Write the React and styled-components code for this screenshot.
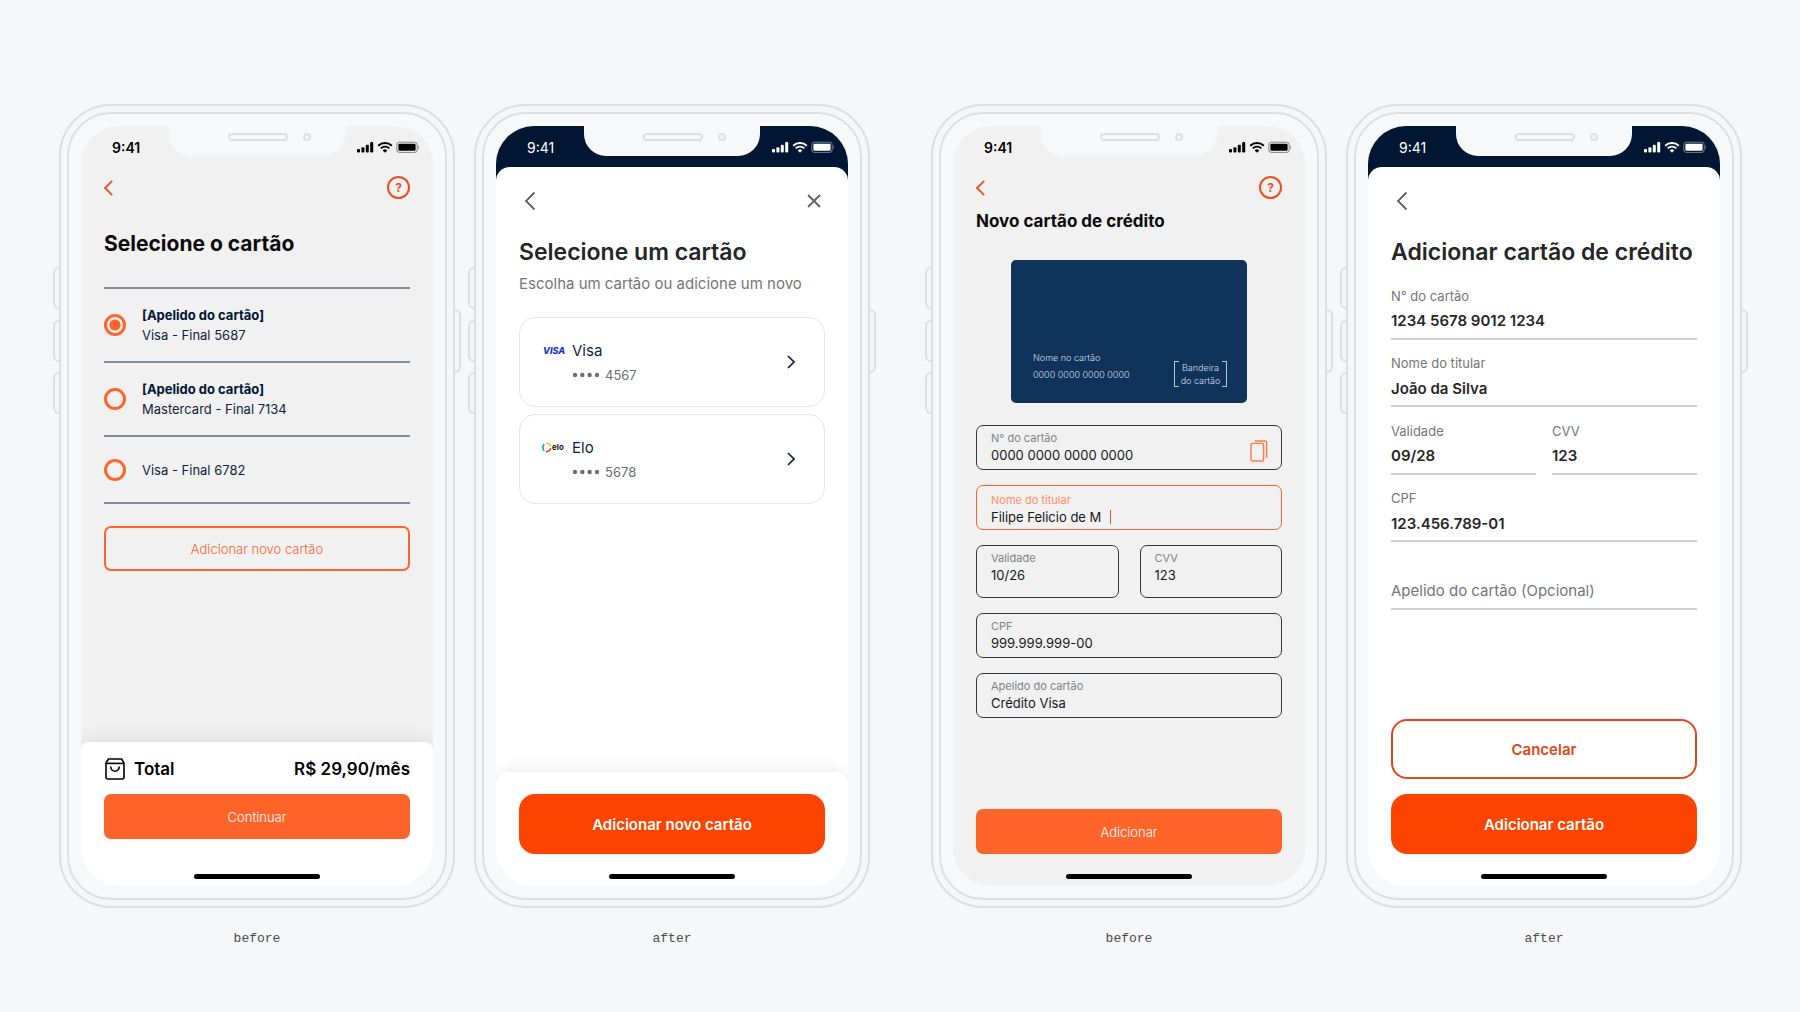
import React, { useState } from "react";
import styled, { createGlobalStyle, css } from "styled-components";

const GlobalStyle = createGlobalStyle`
  * {
    box-sizing: border-box;
  }

  body {
    margin: 0;
    background: #f6f7f9;
    font-family: Inter, "Liberation Sans", sans-serif;
    -webkit-font-smoothing: antialiased;
  }

  button,
  input {
    font-family: inherit;
    margin: 0;
  }

  button {
    cursor: pointer;
  }
`;

/* ---------- page ---------- */

const Page = styled.main`
  min-height: 100vh;
  display: flex;
  flex-wrap: wrap;
  justify-content: center;
  align-items: flex-start;
  gap: 61px;
  padding: 104px 0 48px 1px;
`;

const Comparison = styled.section`
  display: flex;
  gap: 19px;
`;

const Device = styled.figure`
  width: 396px;
  margin: 0;
`;

const Caption = styled.figcaption`
  margin-top: 21px;
  text-align: center;
  font-family: "Liberation Mono", monospace;
  font-size: 13px;
  line-height: 20px;
  color: #4d4d4d;
`;

/* ---------- phone ---------- */

const Shell = styled.div`
  position: relative;
  border: 2px solid #dedfe1;
  border-radius: 52px;
  padding: 6px;
`;

const Bezel = styled.div`
  border: 2px solid #dedfe1;
  border-radius: 44px;
  padding: 12px;
  background: #f7f8fa;
`;

const SideKey = styled.span`
  position: absolute;
  top: ${(props) => props.$top}px;
  width: 8px;
  height: ${(props) => props.$height}px;
  border: 2px solid #dedfe1;
  ${(props) =>
    props.$right
      ? css`
          right: -8px;
          border-left: none;
          border-radius: 0 6px 6px 0;
        `
      : css`
          left: -8px;
          border-right: none;
          border-radius: 6px 0 0 6px;
        `}
`;

const Screen = styled.div`
  position: relative;
  display: flex;
  flex-direction: column;
  min-height: 760px;
  border-radius: 38px;
  overflow: hidden;
  background: ${(props) =>
    props.$dark ? "linear-gradient(#001633 80px, #fff 80px)" : "#f1f1f1"};
`;

const Notch = styled.div`
  position: absolute;
  top: 0;
  left: 50%;
  width: 176px;
  height: 30px;
  margin-left: -88px;
  padding: 7px 0 0 59px;
  display: flex;
  align-items: flex-start;
  gap: 15px;
  border-radius: 0 0 22px 22px;
  background: #f7f8fa;
`;

const Speaker = styled.span`
  width: 60px;
  height: 8px;
  border: 2px solid #dedfe1;
  border-radius: 4px;
`;

const Camera = styled.span`
  width: 8px;
  height: 8px;
  border: 2px solid #dedfe1;
  border-radius: 50%;
`;

const StatusBar = styled.div`
  display: flex;
  justify-content: space-between;
  align-items: center;
  height: 41px;
  padding: 1px 13px 0 31px;
  font-size: 14px;
  font-weight: ${(props) => (props.$dark ? 400 : 600)};
  color: ${(props) => (props.$dark ? "#fff" : "#000")};
`;

const HomeIndicator = styled.div`
  position: absolute;
  left: 50%;
  bottom: 7px;
  width: 126px;
  height: 5px;
  margin-left: -63px;
  border-radius: 3px;
  background: #000;
`;

/* ---------- shared parts ---------- */

const Panel = styled.div`
  flex: 1;
  display: flex;
  flex-direction: column;
  ${(props) =>
    props.$raised &&
    css`
      background: #fff;
      border-radius: 14px 14px 0 0;
    `}
`;

const Header = styled.header`
  display: flex;
  justify-content: space-between;
  align-items: center;
  height: ${(props) => (props.$tall ? 68 : 41)}px;
  padding: 0 23px;
`;

const IconButton = styled.button`
  display: flex;
  padding: 0;
  border: none;
  background: none;
  color: ${(props) => props.$color};
`;

const HelpButton = styled.button`
  width: 23px;
  height: 23px;
  padding: 0;
  border: 2px solid #e8501f;
  border-radius: 50%;
  background: none;
  color: #e8501f;
  font-size: 12px;
  font-weight: 700;
  line-height: 18px;
`;

const Content = styled.div`
  flex: 1;
  padding: 0 23px;
`;

const OldTitle = styled.h1`
  margin: ${(props) => (props.$small ? "0 0 26px" : "22px 0 29px")};
  font-size: ${(props) => (props.$small ? 17 : 21)}px;
  font-weight: 700;
  line-height: ${(props) => (props.$small ? 26 : 28)}px;
  color: #0a0a0a;
`;

const Title = styled.h1`
  margin: 0 0 3px;
  font-size: 23px;
  font-weight: 600;
  line-height: 34px;
  color: #262626;
`;

const Subtitle = styled.p`
  margin: 0 0 21px;
  font-size: 15px;
  line-height: 24px;
  color: #75767a;
`;

const OldButton = styled.button`
  display: block;
  width: 100%;
  height: 45px;
  border: 2px solid #ff642b;
  border-radius: 7px;
  font-size: 13px;
  font-weight: 300;
  background: ${(props) => (props.$outline ? "none" : "#ff642b")};
  color: ${(props) => (props.$outline ? "#fb6130" : "#fff")};
`;

const Button = styled.button`
  display: block;
  width: 100%;
  height: 60px;
  border: 2px solid ${(props) => (props.$outline ? "#e04817" : "#fc4300")};
  border-radius: 16px;
  font-size: 15px;
  font-weight: 600;
  background: ${(props) => (props.$outline ? "#fff" : "#fc4300")};
  color: ${(props) => (props.$outline ? "#e04817" : "#fff")};
`;

const Footer = styled.footer`
  display: flex;
  flex-direction: column;
  gap: 15px;
  padding: 0 23px 32px;
`;

const BottomSheet = styled.footer`
  display: flex;
  flex-direction: column;
  gap: 14px;
  padding: ${(props) => (props.$rounded ? "22px 23px 32px" : "16px 23px 47px")};
  border-radius: ${(props) =>
    props.$rounded ? "14px 14px 0 0" : "8px 8px 0 0"};
  background: #fff;
  box-shadow: 0 -3px 16px rgba(0, 0, 0, 0.08);
`;

/* ---------- card selection, before ---------- */

const RadioList = styled.div`
  margin-bottom: 22px;
  border-top: 2px solid #818c97;
`;

const RadioRow = styled.label`
  display: flex;
  align-items: center;
  gap: 16px;
  min-height: 67px;
  padding: 16px 0;
  border-bottom: 2px solid #818c97;
  font-size: 13px;
  line-height: 20px;
  color: #12233d;
  cursor: pointer;

  strong {
    display: block;
    font-weight: 700;
    color: #001633;
  }
`;

const Radio = styled.input`
  appearance: none;
  width: 22px;
  height: 22px;
  margin: 0;
  border: 3px solid #ff642b;
  border-radius: 50%;
  cursor: pointer;

  &:checked {
    background: radial-gradient(circle, #ff642b 5px, transparent 6px)
      padding-box;
  }
`;

const TotalRow = styled.div`
  display: flex;
  align-items: center;
  gap: 8px;
  height: 22px;
  font-size: 17px;
  font-weight: 600;
  color: #000;
`;

const Price = styled.span`
  margin-left: auto;
`;

/* ---------- card selection, after ---------- */

const CardList = styled.div`
  display: flex;
  flex-direction: column;
  gap: 7px;
`;

const CardOption = styled.button`
  display: flex;
  align-items: center;
  justify-content: space-between;
  height: 90px;
  padding: 2px 21px 0 22px;
  border: 1px solid #e6e6e8;
  border-radius: 16px;
  background: #fff;
  text-align: left;
`;

const CardInfo = styled.span`
  display: grid;
  grid-template-columns: 24px auto;
  column-gap: 6px;
  align-items: center;
  line-height: 24px;
`;

const CardBrand = styled.span`
  font-size: 15px;
  color: #0d1f3c;
`;

const CardDigits = styled.span`
  grid-column: 2;
  display: flex;
  align-items: center;
  gap: 5px;
  font-size: 13px;
  color: #6d6e72;
`;

/* ---------- card form, before ---------- */

const CardPreview = styled.div`
  display: flex;
  justify-content: space-between;
  align-items: flex-end;
  width: 236px;
  height: 143px;
  margin: 0 auto 22px;
  padding: 0 20px 16px 22px;
  border-radius: 5px;
  background: #0f335b;
  color: #d5dde7;
  font-size: 9px;
  font-weight: 300;
`;

const PreviewName = styled.div`
  padding-bottom: 4px;
  line-height: 17px;
`;

const PreviewFlag = styled.div`
  position: relative;
  width: 53px;
  line-height: 13px;
  text-align: center;

  &::before,
  &::after {
    content: "";
    position: absolute;
    top: 0;
    bottom: 0;
    width: 4px;
    border: 1px solid #b9c4d1;
  }

  &::before {
    left: 0;
    border-right: none;
  }

  &::after {
    right: 0;
    border-left: none;
  }
`;

const OldForm = styled.form`
  display: grid;
  grid-template-columns: 1fr 1fr;
  gap: 15px 21px;
`;

const OldField = styled.div`
  position: relative;
  grid-column: ${(props) => (props.$half ? "auto" : "1 / -1")};
  height: ${(props) => (props.$half ? 53 : 45)}px;
  padding: ${(props) => (props.$active ? 6 : 4)}px 14px 0;
  border: 1px solid ${(props) => (props.$active ? "#fb6130" : "#33373c")};
  border-radius: 7px;

  label {
    display: block;
    font-size: 11px;
    line-height: 16px;
    color: ${(props) => (props.$active ? "#ff8f68" : "#808286")};
  }

  input {
    display: block;
    width: 100%;
    height: 18px;
    padding: 0;
    border: none;
    outline: none;
    background: none;
    font-size: 13px;
    color: #16181b;
  }
`;

const TypingRow = styled.div`
  display: flex;
  align-items: center;
  gap: 9px;

  input {
    width: auto;
    field-sizing: content;
  }
`;

const Caret = styled.span`
  width: 1px;
  height: 14px;
  background: #e8501f;
`;

const ScanButton = styled(IconButton)`
  position: absolute;
  right: 13px;
  top: 14px;
`;

/* ---------- card form, after ---------- */

const Form = styled.form`
  display: grid;
  grid-template-columns: 1fr 1fr;
  grid-template-rows: repeat(5, 1fr);
  column-gap: 16px;
  min-height: 338px;
`;

const Field = styled.div`
  grid-column: ${(props) => (props.$half ? "auto" : "1 / -1")};
  display: flex;
  flex-direction: column;
  justify-content: flex-end;
  gap: 3px;
  padding-bottom: 5px;
  border-bottom: 2px solid #cfd0d5;

  label {
    font-size: 13px;
    line-height: 20px;
    color: #75767a;
  }

  input {
    width: 100%;
    height: 24px;
    padding: 0;
    border: none;
    outline: none;
    background: none;
    font-size: 15px;
    font-weight: 600;
    color: #262626;
  }

  input::placeholder {
    font-weight: 400;
    color: #75767a;
  }
`;

/* ---------- icons ---------- */

function StatusIcons() {
  return (
    <svg width="64" height="13" viewBox="0 0 64 13" fill="currentColor">
      <rect x="1" y="8" width="3" height="3.6" rx="1" />
      <rect x="5.4" y="6.2" width="3" height="5.4" rx="1" />
      <rect x="9.8" y="3.8" width="3" height="7.8" rx="1" />
      <rect x="14.2" y="1" width="3" height="10.6" rx="1" />
      <g fill="none" stroke="currentColor" strokeWidth="1.9">
        <path d="M22.2 4.7a9.8 9.8 0 0 1 13.6 0" />
        <path d="M24.7 7.4a6.2 6.2 0 0 1 8.6 0" />
      </g>
      <path d="M26.7 9.4a3.4 3.4 0 0 1 4.6 0L29 11.8z" />
      <rect
        x="40.8"
        y="1.2"
        width="20.4"
        height="10.2"
        rx="2.6"
        fill="none"
        stroke="currentColor"
        strokeOpacity="0.45"
      />
      <rect x="42.4" y="2.8" width="17.2" height="7" rx="1.2" />
      <path d="M62.4 4.7c1.2.5 1.2 2.7 0 3.2z" opacity="0.5" />
    </svg>
  );
}

function BackIcon({ small }) {
  return small ? (
    <svg width="10" height="16" viewBox="0 0 10 16" fill="none">
      <path d="M8.2.8 1 8l7.2 7.2" stroke="currentColor" strokeWidth="1.8" />
    </svg>
  ) : (
    <svg width="22" height="22" viewBox="0 0 22 22" fill="none">
      <path d="M15.5 2.5 7 11l8.5 8.5" stroke="currentColor" strokeWidth="1.8" />
    </svg>
  );
}

function CloseIcon() {
  return (
    <svg width="22" height="22" viewBox="0 0 22 22" fill="none">
      <path
        d="m5 5 12 12M17 5 5 17"
        stroke="currentColor"
        strokeWidth="1.8"
      />
    </svg>
  );
}

function NextIcon() {
  return (
    <svg width="24" height="24" viewBox="0 0 24 24" fill="none">
      <path d="m9 5 6 6-6 6" stroke="#0d1f3c" strokeWidth="1.7" />
    </svg>
  );
}

function BagIcon() {
  return (
    <svg width="22" height="22" viewBox="0 0 22 22" fill="none">
      <g stroke="#000" strokeWidth="1.6" strokeLinejoin="round">
        <path d="M2 5.2 4.4 1h13.2L20 5.2v14a1.8 1.8 0 0 1-1.8 1.8H3.8A1.8 1.8 0 0 1 2 19.2z" />
        <path d="M2 5.4h18" />
        <path d="M6.8 8.4v.6a4.2 4.2 0 0 0 8.4 0v-.6" />
      </g>
    </svg>
  );
}

function CopyIcon() {
  return (
    <svg width="18" height="22" viewBox="0 0 18 22" fill="none">
      <g stroke="#ff7a45" strokeWidth="1.4">
        <rect x="1" y="3.4" width="12.6" height="17.6" rx="1.6" />
        <path d="M5 1h10a1.6 1.6 0 0 1 1.6 1.6V18" />
      </g>
    </svg>
  );
}

function VisaLogo() {
  return (
    <svg width="24" height="12" viewBox="0 0 24 12">
      <text
        x="1"
        y="9"
        fontFamily="Inter, sans-serif"
        fontSize="9"
        fontStyle="italic"
        fontWeight="800"
        fill="#1a33c4"
      >
        VISA
      </text>
    </svg>
  );
}

function EloLogo() {
  return (
    <svg width="24" height="12" viewBox="0 0 24 12">
      <g fill="none" strokeWidth="1.6">
        <path d="M2.3 2.1a4.4 4.4 0 0 0 0 6.6" stroke="#1ba0dc" />
        <path d="M3.8 1.3a4.3 4.3 0 0 1 5 3.2" stroke="#f8c320" />
        <path d="M8.8 6.3a4.3 4.3 0 0 1-5 3.2" stroke="#e8432c" />
      </g>
      <text
        x="10"
        y="8"
        fontFamily="Inter, sans-serif"
        fontSize="8"
        fontWeight="700"
        fill="#1c1c1c"
      >
        elo
      </text>
    </svg>
  );
}

function Dots() {
  return (
    <svg width="28" height="6" viewBox="0 0 28 6" fill="currentColor">
      <circle cx="3" cy="3" r="2.2" />
      <circle cx="10.3" cy="3" r="2.2" />
      <circle cx="17.6" cy="3" r="2.2" />
      <circle cx="25" cy="3" r="2.2" />
    </svg>
  );
}

/* ---------- components ---------- */

function Phone({ dark, caption, children }) {
  return (
    <Device>
      <Shell>
        <SideKey $top={161} $height={42} />
        <SideKey $top={214} $height={42} />
        <SideKey $top={266} $height={42} />
        <SideKey $right $top={203} $height={64} />
        <Bezel>
          <Screen $dark={dark}>
            <StatusBar $dark={dark}>
              <span>9:41</span>
              <StatusIcons />
            </StatusBar>
            <Notch>
              <Speaker />
              <Camera />
            </Notch>
            {children}
            <HomeIndicator />
          </Screen>
        </Bezel>
      </Shell>
      <Caption>{caption}</Caption>
    </Device>
  );
}

function OldHeader() {
  return (
    <Header>
      <IconButton type="button" $color="#e8501f" aria-label="Voltar">
        <BackIcon small />
      </IconButton>
      <HelpButton type="button">?</HelpButton>
    </Header>
  );
}

function NewHeader({ closable }) {
  return (
    <Header $tall>
      <IconButton type="button" $color="#5f6064" aria-label="Voltar">
        <BackIcon />
      </IconButton>
      {closable && (
        <IconButton type="button" $color="#5f6064" aria-label="Fechar">
          <CloseIcon />
        </IconButton>
      )}
    </Header>
  );
}

const savedCards = [
  { id: "5687", nickname: "[Apelido do cartão]", text: "Visa - Final 5687" },
  {
    id: "7134",
    nickname: "[Apelido do cartão]",
    text: "Mastercard - Final 7134",
  },
  { id: "6782", text: "Visa - Final 6782" },
];

function SelectBefore() {
  const [selected, setSelected] = useState("5687");

  return (
    <Phone caption="before">
      <Panel>
        <OldHeader />
        <Content>
          <OldTitle>Selecione o cartão</OldTitle>
          <RadioList>
            {savedCards.map((card) => (
              <RadioRow key={card.id}>
                <Radio
                  type="radio"
                  name="saved-card"
                  checked={selected === card.id}
                  onChange={() => setSelected(card.id)}
                />
                <span>
                  {card.nickname && <strong>{card.nickname}</strong>}
                  {card.text}
                </span>
              </RadioRow>
            ))}
          </RadioList>
          <OldButton type="button" $outline>
            Adicionar novo cartão
          </OldButton>
        </Content>
        <BottomSheet>
          <TotalRow>
            <BagIcon />
            <span>Total</span>
            <Price>R$ 29,90/mês</Price>
          </TotalRow>
          <OldButton type="button">Continuar</OldButton>
        </BottomSheet>
      </Panel>
    </Phone>
  );
}

function SelectAfter() {
  return (
    <Phone dark caption="after">
      <Panel $raised>
        <NewHeader closable />
        <Content>
          <Title>Selecione um cartão</Title>
          <Subtitle>Escolha um cartão ou adicione um novo</Subtitle>
          <CardList>
            <CardOption type="button">
              <CardInfo>
                <VisaLogo />
                <CardBrand>Visa</CardBrand>
                <CardDigits>
                  <Dots />
                  4567
                </CardDigits>
              </CardInfo>
              <NextIcon />
            </CardOption>
            <CardOption type="button">
              <CardInfo>
                <EloLogo />
                <CardBrand>Elo</CardBrand>
                <CardDigits>
                  <Dots />
                  5678
                </CardDigits>
              </CardInfo>
              <NextIcon />
            </CardOption>
          </CardList>
        </Content>
        <BottomSheet $rounded>
          <Button type="button">Adicionar novo cartão</Button>
        </BottomSheet>
      </Panel>
    </Phone>
  );
}

function FormBefore() {
  return (
    <Phone caption="before">
      <Panel>
        <OldHeader />
        <Content>
          <OldTitle $small>Novo cartão de crédito</OldTitle>
          <CardPreview>
            <PreviewName>
              Nome no cartão
              <br />
              0000 0000 0000 0000
            </PreviewName>
            <PreviewFlag>
              Bandeira
              <br />
              do cartão
            </PreviewFlag>
          </CardPreview>
          <OldForm>
            <OldField>
              <label htmlFor="old-number">N° do cartão</label>
              <input id="old-number" defaultValue="0000 0000 0000 0000" />
              <ScanButton type="button" aria-label="Copiar">
                <CopyIcon />
              </ScanButton>
            </OldField>
            <OldField $active>
              <label htmlFor="old-name">Nome do titular</label>
              <TypingRow>
                <input id="old-name" defaultValue="Filipe Felicio de M" />
                <Caret />
              </TypingRow>
            </OldField>
            <OldField $half>
              <label htmlFor="old-expiry">Validade</label>
              <input id="old-expiry" defaultValue="10/26" />
            </OldField>
            <OldField $half>
              <label htmlFor="old-cvv">CVV</label>
              <input id="old-cvv" defaultValue="123" />
            </OldField>
            <OldField>
              <label htmlFor="old-cpf">CPF</label>
              <input id="old-cpf" defaultValue="999.999.999-00" />
            </OldField>
            <OldField>
              <label htmlFor="old-nickname">Apelido do cartão</label>
              <input id="old-nickname" defaultValue="Crédito Visa" />
            </OldField>
          </OldForm>
        </Content>
        <Footer>
          <OldButton type="button">Adicionar</OldButton>
        </Footer>
      </Panel>
    </Phone>
  );
}

function FormAfter() {
  return (
    <Phone dark caption="after">
      <Panel $raised>
        <NewHeader />
        <Content>
          <Title>Adicionar cartão de crédito</Title>
          <Form>
            <Field>
              <label htmlFor="number">N° do cartão</label>
              <input id="number" defaultValue="1234 5678 9012 1234" />
            </Field>
            <Field>
              <label htmlFor="name">Nome do titular</label>
              <input id="name" defaultValue="João da Silva" />
            </Field>
            <Field $half>
              <label htmlFor="expiry">Validade</label>
              <input id="expiry" defaultValue="09/28" />
            </Field>
            <Field $half>
              <label htmlFor="cvv">CVV</label>
              <input id="cvv" defaultValue="123" />
            </Field>
            <Field>
              <label htmlFor="cpf">CPF</label>
              <input id="cpf" defaultValue="123.456.789-01" />
            </Field>
            <Field>
              <input
                aria-label="Apelido do cartão (Opcional)"
                placeholder="Apelido do cartão (Opcional)"
              />
            </Field>
          </Form>
        </Content>
        <Footer>
          <Button type="button" $outline>
            Cancelar
          </Button>
          <Button type="button">Adicionar cartão</Button>
        </Footer>
      </Panel>
    </Phone>
  );
}

export default function App() {
  return (
    <>
      <GlobalStyle />
      <Page>
        <Comparison>
          <SelectBefore />
          <SelectAfter />
        </Comparison>
        <Comparison>
          <FormBefore />
          <FormAfter />
        </Comparison>
      </Page>
    </>
  );
}
